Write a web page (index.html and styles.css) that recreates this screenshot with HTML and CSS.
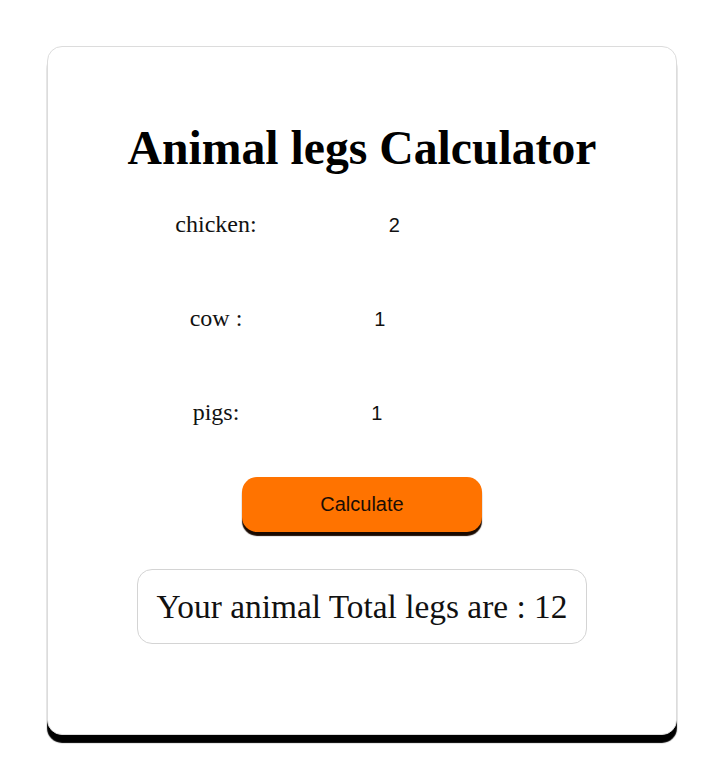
FILE: index.html
```html
<!DOCTYPE html>
<html lang="en">
<head>
<meta charset="utf-8">
<title>Animal legs Calculator</title>
<link rel="stylesheet" href="styles.css">
</head>
<body>
  <div class="card">
    <h1 class="title">Animal legs Calculator</h1>
    <div class="row">
      <label class="label" for="chicken">chicken:</label>
      <input class="value" id="chicken" type="text" value="2">
    </div>
    <div class="row">
      <label class="label" for="cow">cow :</label>
      <input class="value" id="cow" type="text" value="1">
    </div>
    <div class="row">
      <label class="label" for="pigs">pigs:</label>
      <input class="value" id="pigs" type="text" value="1">
    </div>
    <div class="actions">
      <button class="btn" type="button">Calculate</button>
    </div>
    <div class="result-wrap">
      <div class="result">Your animal Total legs are : 12</div>
    </div>
  </div>
</body>
</html>
```

FILE: styles.css
```css
html, body {
  margin: 0;
  padding: 0;
  background: #ffffff;
}

body {
  padding: 46px 0 33px 47px;
  font-family: "Liberation Serif", "Times New Roman", serif;
  color: #000;
}

.card {
  box-sizing: border-box;
  width: 630px;
  height: 689px;
  border: 1px solid #dcdcdc;
  border-radius: 15px;
  background: #fff;
  box-shadow: 0 8px 1px #000;
  padding-top: 73px;
}

.title {
  margin: 0;
  font-size: 47.7px;
  line-height: 56px;
  font-weight: bold;
  text-align: center;
}

.row {
  display: flex;
  justify-content: center;
  align-items: baseline;
  height: 28px;
  margin-top: 66px;
}

.row:first-of-type {
  margin-top: 34px;
}

.label {
  font-family: "Liberation Serif", "Times New Roman", serif;
  font-size: 24px;
  line-height: 28px;
  color: #111;
}

.value {
  box-sizing: border-box;
  width: 160px;
  margin: 0 0 0 132px;
  padding: 0;
  border: none;
  outline: none;
  background: transparent;
  font-family: "Liberation Sans", Arial, sans-serif;
  font-size: 20px;
  line-height: 24px;
  color: #111;
}

.actions {
  display: flex;
  justify-content: center;
  margin-top: 51px;
}

.btn {
  box-sizing: border-box;
  width: 240px;
  height: 55px;
  border: none;
  border-radius: 15px;
  background: #ff7300;
  box-shadow: 0 4px 1px #1a0a00;
  font-family: "Liberation Sans", Arial, sans-serif;
  font-size: 20px;
  color: #1a0d05;
  padding: 0;
  cursor: pointer;
}

.result-wrap {
  display: flex;
  justify-content: center;
  margin-top: 37px;
}

.result {
  box-sizing: border-box;
  height: 75px;
  padding: 0 19px;
  border: 1px solid #d4d4d4;
  border-radius: 15px;
  display: flex;
  align-items: center;
  font-size: 33.4px;
  color: #111;
  white-space: nowrap;
}
```
